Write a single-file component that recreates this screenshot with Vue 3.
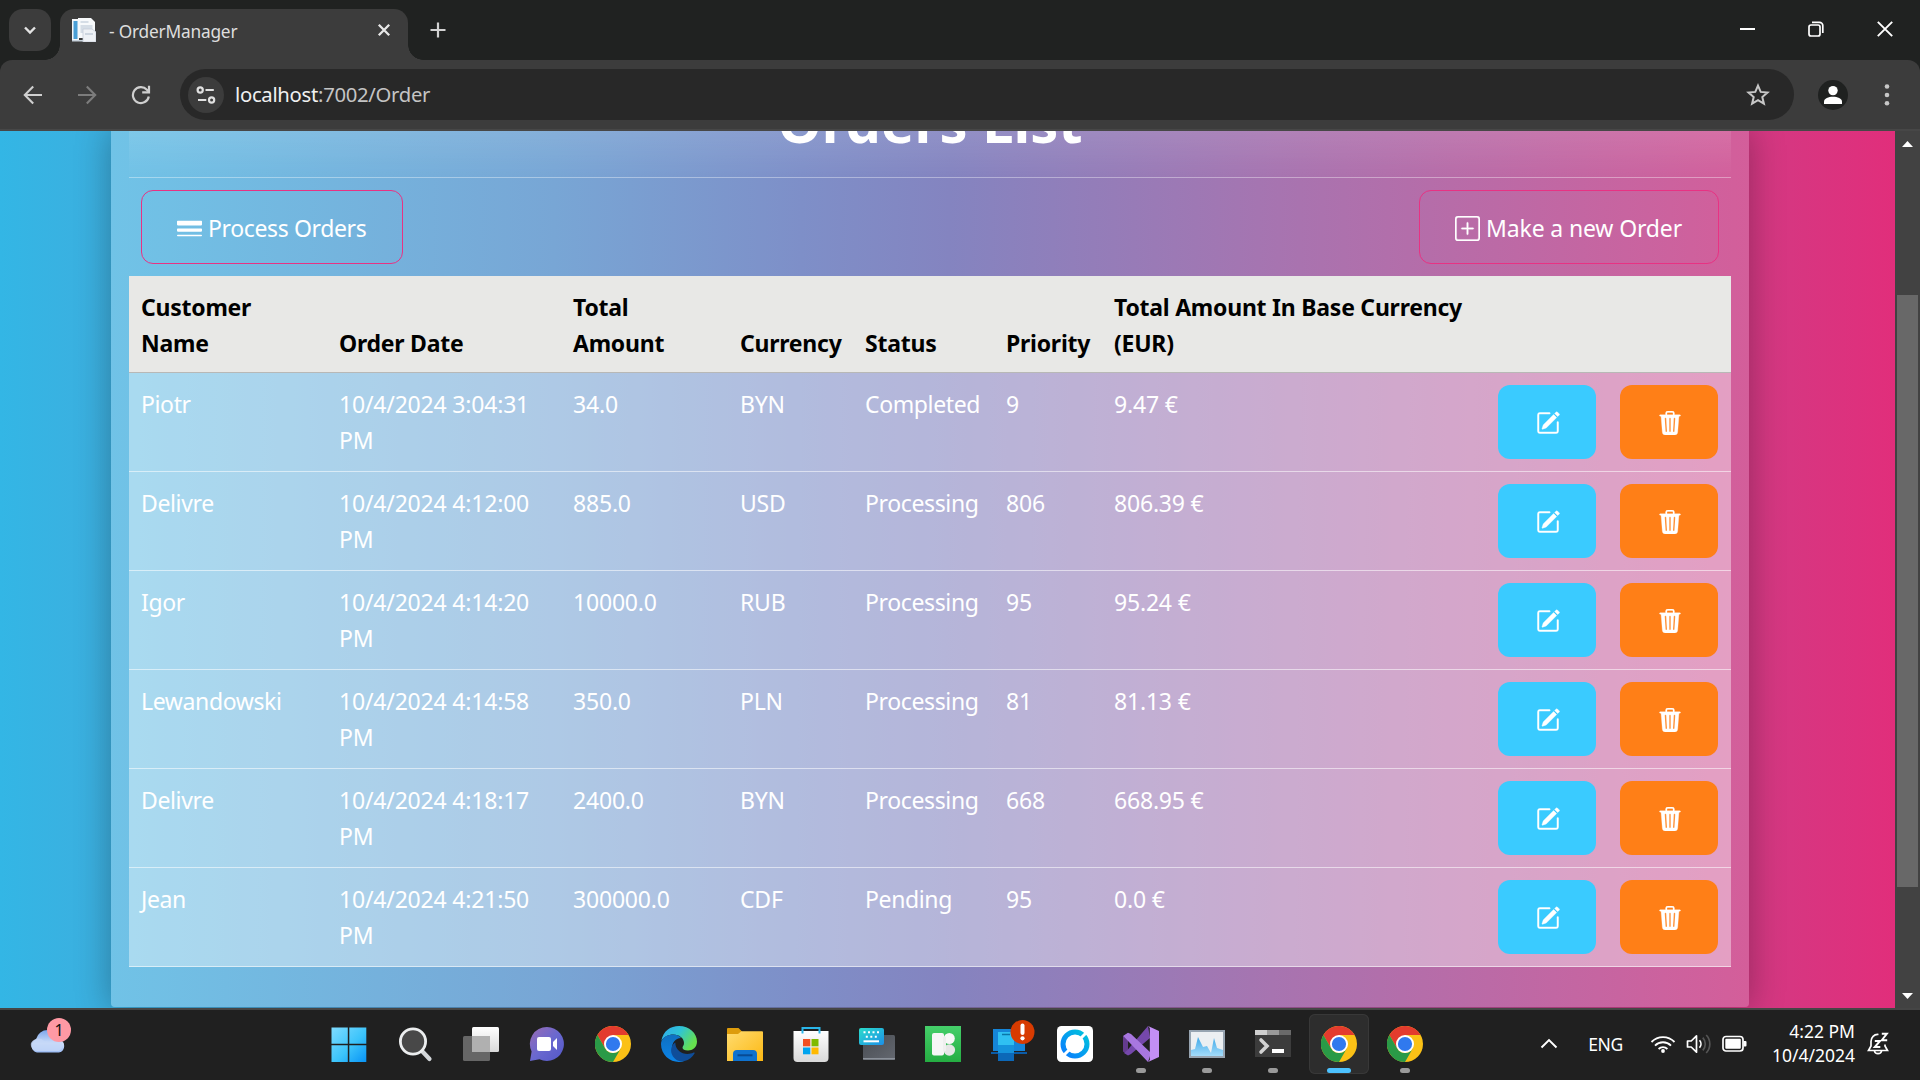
<script setup>
const orders = [
  { customer: 'Piotr', date: '10/4/2024 3:04:31', amount: '34.0', currency: 'BYN', status: 'Completed', priority: 9, base: '9.47 €' },
  { customer: 'Delivre', date: '10/4/2024 4:12:00', amount: '885.0', currency: 'USD', status: 'Processing', priority: 806, base: '806.39 €' },
  { customer: 'Igor', date: '10/4/2024 4:14:20', amount: '10000.0', currency: 'RUB', status: 'Processing', priority: 95, base: '95.24 €' },
  { customer: 'Lewandowski', date: '10/4/2024 4:14:58', amount: '350.0', currency: 'PLN', status: 'Processing', priority: 81, base: '81.13 €' },
  { customer: 'Delivre', date: '10/4/2024 4:18:17', amount: '2400.0', currency: 'BYN', status: 'Processing', priority: 668, base: '668.95 €' },
  { customer: 'Jean', date: '10/4/2024 4:21:50', amount: '300000.0', currency: 'CDF', status: 'Pending', priority: 95, base: '0.0 €' }
]
const apps = [
  { id: 'start' }, { id: 'search' }, { id: 'taskview' }, { id: 'chat' }, { id: 'chrome' }, { id: 'edge' },
  { id: 'folder' }, { id: 'store' }, { id: 'keyboard' }, { id: 'icons8' }, { id: 'phone' }, { id: 'ring' },
  { id: 'vs', open: true }, { id: 'perf', open: true }, { id: 'terminal', open: true },
  { id: 'chrome', active: true }, { id: 'chrome', open: true }
]
</script>

<template>
  <div class="screen">
    <header class="tabstrip">
      <button class="tabsearch">
        <svg width="14" height="14" viewBox="0 0 14 14"><path d="M2 4.500l5 5 5-5" fill="none" stroke="#e3e3e3" stroke-width="2.400" /></svg>
      </button>
      <div class="tab">
        <svg class="favicon" width="24" height="24" viewBox="0 0 24 24">
          <path d="M0 1h7v22H0z" fill="#f4f6f8" /><path d="M1.500 3h4v18h-4z" fill="#4a9fd6" />
          <path d="M6 0h13l4 4v16H6z" fill="#f7f9fb" /><path d="M8.500 3h8v2h-8zM8.500 7h12v8h-12z" fill="#d5dde6" />
          <path d="M11 11h9l4 3v10H11z" fill="#eef1f5" stroke="#c5cdd8" stroke-width=".8" />
          <path d="M13 15h8v2h-8z" fill="#cdd5df" /><path d="M0 22h11v1.500H0z" fill="#c9d3dd" />
        </svg>
        <span class="tabtitle">- OrderManager</span>
        <svg class="tabclose" width="14" height="14" viewBox="0 0 14 14"><path d="M1.800 1.800l10.400 10.400M12.200 1.800L1.800 12.200" stroke="#e8e8e8" stroke-width="2.300" /></svg>
      </div>
      <svg class="newtab" width="16" height="16" viewBox="0 0 16 16"><path d="M8 .5v15M.5 8h15" stroke="#d2d2d2" stroke-width="2.200" /></svg>
      <div class="winbtns">
        <svg width="16" height="16" viewBox="0 0 16 16"><path d="M1 8h15" stroke="#fff" stroke-width="2" /></svg>
        <svg width="16" height="16" viewBox="0 0 16 16" fill="none" stroke="#fff" stroke-width="1.700">
          <rect x="1" y="4" width="11" height="11" rx="2" /><path d="M4 1.300h7.500a3.300 3.300 0 0 1 3.300 3.300V12" />
        </svg>
        <svg width="16" height="16" viewBox="0 0 16 16"><path d="M.8.8l14.400 14.400M15.200.8L.8 15.200" stroke="#fff" stroke-width="1.900" /></svg>
      </div>
    </header>

    <nav class="toolbar">
      <svg class="nav" width="20" height="20" viewBox="0 0 20 20" fill="none" stroke="#cfcfcf" stroke-width="2.100"><path d="M19 10H2M10.200 1.500L1.800 10l8.400 8.500" /></svg>
      <svg class="nav" width="20" height="20" viewBox="0 0 20 20" fill="none" stroke="#7c7c7c" stroke-width="2.100"><path d="M1 10h17M9.800 1.500L18.200 10l-8.400 8.500" /></svg>
      <svg class="nav" width="20" height="20" viewBox="0 0 20 20" fill="none" stroke="#cfcfcf" stroke-width="2.200"><path d="M17.800 11.500A8 8 0 1 1 15.900 4.700L17.500 6.500" /><path d="M18 .8V7.300H11.200" /></svg>
      <div class="address">
        <span class="siteinfo">
          <svg width="20" height="20" viewBox="0 0 20 20" fill="none" stroke="#e0e0e0" stroke-width="2.200">
            <circle cx="4.200" cy="5" r="2.600" /><path d="M9.500 5h8.300M2 15h8.300" /><circle cx="15.600" cy="15" r="2.600" />
          </svg>
        </span>
        <span class="url"><b>localhost</b>:7002/Order</span>
        <svg class="star" width="24" height="24" viewBox="0 0 24 24"><path d="M12 2.600l2.700 6.300 6.800.6-5.200 4.500 1.600 6.700L12 17.100l-5.900 3.600 1.600-6.700-5.200-4.500 6.800-.6z" fill="none" stroke="#c7c7c7" stroke-width="2" /></svg>
      </div>
      <span class="profile">
        <svg width="30" height="30" viewBox="0 0 30 30"><circle cx="15" cy="15" r="15" fill="#1f2120" /><circle cx="15" cy="10.600" r="4.700" fill="#fff" /><path d="M6 24v-2.300c0-3.400 4.500-5 9-5s9 1.600 9 5V24z" fill="#fff" /></svg>
      </span>
      <svg class="dots" width="6" height="24" viewBox="0 0 6 24" fill="#c7c7c7"><circle cx="3" cy="3.500" r="2.300" /><circle cx="3" cy="12" r="2.300" /><circle cx="3" cy="20.300" r="2.300" /></svg>
    </nav>

    <main class="viewport">
      <div class="page">
        <section class="card">
          <div class="cardhead"><h1>Orders List</h1></div>
          <div class="actions">
            <button class="outline process">
              <svg width="25" height="25" viewBox="0 0 16 16" fill="#fff"><path d="M0 3.500A.5.5 0 0 1 .5 3h15a.5.5 0 0 1 .5.5v2a.5.5 0 0 1-.5.5H.5a.5.5 0 0 1-.5-.5v-2zm0 5A.5.5 0 0 1 .5 8h15a.5.5 0 0 1 .5.5v1a.5.5 0 0 1-.5.5H.5a.5.5 0 0 1-.5-.5v-1zm0 4a.5.5 0 0 1 .5-.5h15a.5.5 0 0 1 0 1H.5a.5.5 0 0 1-.5-.5z" /></svg>
              <span>Process Orders</span>
            </button>
            <button class="outline make">
              <svg width="25" height="25" viewBox="0 0 16 16" fill="#fff" stroke="#fff" stroke-width=".2"><path d="M14 1a1 1 0 0 1 1 1v12a1 1 0 0 1-1 1H2a1 1 0 0 1-1-1V2a1 1 0 0 1 1-1h12zM2 0a2 2 0 0 0-2 2v12a2 2 0 0 0 2 2h12a2 2 0 0 0 2-2V2a2 2 0 0 0-2-2H2z" /><path d="M8 4a.5.5 0 0 1 .5.5v3h3a.5.5 0 0 1 0 1h-3v3a.5.5 0 0 1-1 0v-3h-3a.5.5 0 0 1 0-1h3v-3A.5.5 0 0 1 8 4z" /></svg>
              <span>Make a new Order</span>
            </button>
          </div>
          <table>
            <colgroup><col class="w1"><col class="w2"><col class="w3"><col class="w4"><col class="w5"><col class="w6"><col class="w7"><col class="w8"><col class="w9"></colgroup>
            <thead>
              <tr>
                <th>Customer<br>Name</th><th>Order Date</th><th>Total<br>Amount</th><th>Currency</th><th>Status</th><th>Priority</th>
                <th>Total Amount In Base Currency<br>(EUR)</th><th></th><th></th>
              </tr>
            </thead>
            <tbody>
              <tr v-for="(o, i) in orders" :key="i">
                <td class="word">{{ o.customer }}</td>
                <td>{{ o.date }}<br>PM</td>
                <td>{{ o.amount }}</td>
                <td>{{ o.currency }}</td>
                <td class="word">{{ o.status }}</td>
                <td>{{ o.priority }}</td>
                <td>{{ o.base }}</td>
                <td class="cell">
                  <button class="act edit">
                    <svg width="24" height="24" viewBox="0 0 16 16" fill="#fff" stroke="#fff" stroke-width=".3"><path d="M15.502 1.940a.5.5 0 0 1 0 .706L14.459 3.690l-2-2L13.502.646a.5.5 0 0 1 .707 0l1.293 1.293zm-1.750 2.456-2-2L4.939 9.210a.5.5 0 0 0-.121.196l-.805 2.414a.25.25 0 0 0 .316.316l2.414-.805a.5.5 0 0 0 .196-.12l6.813-6.814z" /><path d="M1 13.500A1.500 1.500 0 0 0 2.500 15h11a1.500 1.500 0 0 0 1.500-1.500v-6a.5.5 0 0 0-1 0v6a.5.5 0 0 1-.5.5h-11a.5.5 0 0 1-.5-.5v-11a.5.5 0 0 1 .5-.5H9a.5.5 0 0 0 0-1H2.500A1.500 1.500 0 0 0 1 2.500v11z" /></svg>
                  </button>
                </td>
                <td class="cell">
                  <button class="act del">
                    <svg width="24" height="24" viewBox="0 0 16 16" fill="#fff" stroke="#fff" stroke-width=".2"><path d="M11 1.500v1h3.500a.5.5 0 0 1 0 1h-.538l-.853 10.660A2 2 0 0 1 11.115 16h-6.230a2 2 0 0 1-1.994-1.840L2.038 3.500H1.500a.5.5 0 0 1 0-1H5v-1A1.500 1.500 0 0 1 6.500 0h3A1.500 1.500 0 0 1 11 1.500Zm-5 0v1h4v-1a.5.5 0 0 0-.5-.5h-3a.5.5 0 0 0-.5.5ZM4.500 5.029l.5 8.500a.5.5 0 1 0 .998-.06l-.5-8.500a.5.5 0 1 0-.998.06Zm6.530-.528a.5.5 0 0 0-.528.470l-.5 8.500a.5.5 0 0 0 .998.058l.5-8.500a.5.5 0 0 0-.470-.528ZM8 4.500a.5.5 0 0 0-.5.5v8.500a.5.5 0 0 0 1 0V5a.5.5 0 0 0-.5-.5Z" /></svg>
                  </button>
                </td>
              </tr>
            </tbody>
          </table>
        </section>
      </div>
      <aside class="scrollbar">
        <svg width="11" height="6" viewBox="0 0 11 6"><path d="M5.500 0L11 6H0z" fill="#fff" /></svg>
        <div class="track"><div class="thumb"></div></div>
        <svg width="11" height="6" viewBox="0 0 11 6"><path d="M5.500 6L11 0H0z" fill="#fff" /></svg>
      </aside>
    </main>

    <footer class="taskbar">
      <svg width="0" height="0" class="defs">
        <defs>
          <linearGradient id="gWin" x1="0" y1="0" x2="1" y2="1"><stop offset="0" stop-color="#7fdcff" /><stop offset=".55" stop-color="#3cc4fb" /><stop offset="1" stop-color="#0893f5" /></linearGradient>
          <linearGradient id="gCloud" x1="0" y1="0" x2="0" y2="1"><stop offset="0" stop-color="#7aa5ec" /><stop offset=".6" stop-color="#cfdffa" /><stop offset="1" stop-color="#9dbdf5" /></linearGradient>
          <linearGradient id="gChat" x1="0" y1="0" x2="1" y2="1"><stop offset="0" stop-color="#9a6cb4" /><stop offset=".5" stop-color="#6a68cf" /><stop offset="1" stop-color="#5358c8" /></linearGradient>
          <linearGradient id="gFold" x1="0" y1="0" x2="1" y2="1"><stop offset="0" stop-color="#ffdc70" /><stop offset="1" stop-color="#fcb813" /></linearGradient>
          <linearGradient id="gEdge" x1="0" y1="0" x2="1" y2=".5"><stop offset="0" stop-color="#2fa8f0" /><stop offset=".5" stop-color="#2fc3d6" /><stop offset="1" stop-color="#66e04e" /></linearGradient>
          <linearGradient id="gEdge2" x1="0" y1="0" x2="0" y2="1"><stop offset="0" stop-color="#0f6fc0" /><stop offset="1" stop-color="#0b84e8" /></linearGradient>
          <linearGradient id="gRing" x1="0" y1="1" x2="1" y2="0"><stop offset="0" stop-color="#0a7cff" /><stop offset="1" stop-color="#00c4dc" /></linearGradient>
          <linearGradient id="gKb" x1="0" y1="0" x2="1" y2="1"><stop offset="0" stop-color="#2bdccb" /><stop offset="1" stop-color="#1c8fe8" /></linearGradient>
          <linearGradient id="gGray" x1="0" y1="0" x2="1" y2="1"><stop offset="0" stop-color="#484c52" /><stop offset="1" stop-color="#646870" /></linearGradient>
          <linearGradient id="gWhite" x1="0" y1="0" x2="0" y2="1"><stop offset="0" stop-color="#fff" /><stop offset="1" stop-color="#d9d9d9" /></linearGradient>
          <linearGradient id="gGreen" x1="0" y1="0" x2="0" y2="1"><stop offset="0" stop-color="#45cf6a" /><stop offset="1" stop-color="#25ad42" /></linearGradient>
          <linearGradient id="gPerf" x1="0" y1="0" x2="0" y2="1"><stop offset="0" stop-color="#3fa8e8" /><stop offset="1" stop-color="#a4dcfa" /></linearGradient>
        </defs>
      </svg>
      <div class="weather">
        <svg width="36" height="26" viewBox="0 0 36 26"><path d="M7 25.500a7 7 0 0 1-1-13.300A12 12 0 0 1 18 3a11 11 0 0 1 11 9.600 6.600 6.600 0 0 1 0 12.900z" fill="url(#gCloud)" /><path d="M1 16c3-5 9-6 13-2 5 3 10-1 15-1a6.500 6.500 0 0 1 0 11H7c-4 0-7-4-6-8z" fill="#c4d7f7" opacity=".8" /></svg>
        <span class="badge">1</span>
      </div>
      <div class="apps">
        <div v-for="(a, i) in apps" :key="i" class="app" :class="{ active: a.active, open: a.open }">
          <svg v-if="a.id === 'start'" width="36" height="36" viewBox="0 0 36 36"><path d="M.5 1.500h16.300v16.300H.5zM18.300 1.500h17v16.300h-17zM.5 19.300h16.300V36H.5zM18.300 19.300h17V36h-17z" fill="url(#gWin)" /></svg>
          <svg v-else-if="a.id === 'search'" width="36" height="36" viewBox="0 0 36 36"><path d="M25 25l7.500 8" stroke="#d4d7da" stroke-width="4.200" stroke-linecap="round" /><circle cx="16" cy="15.500" r="12.600" fill="#484848" stroke="#eceeef" stroke-width="2.800" /></svg>
          <svg v-else-if="a.id === 'taskview'" width="36" height="36" viewBox="0 0 36 36"><rect x="9" y="1" width="27" height="25" rx="1.500" fill="url(#gWhite)" /><rect x="0" y="10" width="27" height="25" rx="1.500" fill="#666" /><path d="M9 10h18v16H9z" fill="#b0b0b0" /></svg>
          <svg v-else-if="a.id === 'chat'" width="36" height="36" viewBox="0 0 36 36"><path d="M18 1a17 17 0 1 1-7.500 32.300L1 35l1.600-9.500A17 17 0 0 1 18 1z" fill="url(#gChat)" /><rect x="8" y="11" width="14" height="14" rx="2" fill="#fff" /><path d="M24 16l4-4v12l-4-4z" fill="#fff" /></svg>
          <svg v-else-if="a.id === 'chrome'" width="36" height="36" viewBox="0 0 36 36">
            <circle cx="18" cy="18" r="18" fill="#fbc116" />
            <path d="M18 18V9h15.600A18 18 0 0 0 2.400 9l7.800 13.500z" fill="#e33b2e" />
            <path d="M2.400 9l7.800 13.500A9 9 0 0 0 25.800 22.500L18 36A18 18 0 0 1 2.400 9z" fill="#2a9a47" />
            <circle cx="18" cy="18" r="9" fill="#fff" /><circle cx="18" cy="18" r="7.100" fill="#3079ee" />
          </svg>
          <svg v-else-if="a.id === 'edge'" width="36" height="36" viewBox="0 0 36 36">
            <path d="M.3 15C2 5 9.500 0 18 0c10.500 0 18 7.500 18 15.500 0 6-4.500 9-9 9-3.500 0-5.500-1.500-5.500-2.800 0-1.400 1.500-2 1.500-4.700C23 12 18 8.500 12.500 8.500 7 8.500 2.500 11 .3 15z" fill="url(#gEdge)" />
            <path d="M0 18C0 12.500 5.500 8.500 12 8.500c4 0 6.500 1.500 8 3.500-6 .5-9 5-9 10 0 7 5 12.500 12 13.200C12 38.500 0 30.500 0 18z" fill="url(#gEdge2)" />
            <path d="M14.300 16.500C10.500 19 9 24 11 28.500c2.500 5.500 7.500 7.500 12.500 6.600 4.500-1 8-4 10-7.500.4-.8-.2-1.300-.9-1-5 2.500-11 1.500-14.500-1.500-2.800-2.500-3.800-5.600-3.800-8.600z" fill="#0f4d99" />
          </svg>
          <svg v-else-if="a.id === 'folder'" width="36" height="36" viewBox="0 0 36 36"><path d="M0 3a1 1 0 0 1 1-1h10.500l3.500 3.500V12H0z" fill="#dd9c0c" /><path d="M0 8h11l3.500-2.800H35a1 1 0 0 1 1 1V35H0z" fill="url(#gFold)" /><path d="M6 35v-7a4 4 0 0 1 4-4h16a4 4 0 0 1 4 4v7z" fill="#0f72cf" /><path d="M10.500 28.300h15v2h-15z" fill="#084a93" /></svg>
          <svg v-else-if="a.id === 'store'" width="36" height="36" viewBox="0 0 36 36"><path d="M.5 5h35v27a4 4 0 0 1-4 4h-27a4 4 0 0 1-4-4z" fill="url(#gWhite)" /><path d="M9.500 7.500V2h17v5.500" fill="none" stroke="#2ab6ea" stroke-width="2" /><path d="M10 13h7.300v7.300H10z" fill="#f25022" /><path d="M18.500 13h7v7.300h-7z" fill="#7fba00" /><path d="M10 21.500h7.300v6.800H10z" fill="#00a4ef" /><path d="M18.500 21.500h7v6.800h-7z" fill="#ffb900" /></svg>
          <svg v-else-if="a.id === 'keyboard'" width="36" height="36" viewBox="0 0 36 36"><rect x="4" y="9" width="32" height="25" rx="1.500" fill="url(#gGray)" /><path d="M4 32h32v1.500H4z" fill="#8c929b" /><rect x="0" y="2" width="25" height="17" rx="2" fill="url(#gKb)" /><path d="M4.500 6.300h2M9 6.300h2M13.500 6.300h2M18 6.300h2M6.800 10.800h2M11.300 10.800h2M15.800 10.800h2" stroke="#fff" stroke-width="2" /><path d="M4.500 15.300h15.500" stroke="#fff" stroke-width="2" /></svg>
          <svg v-else-if="a.id === 'icons8'" width="36" height="36" viewBox="0 0 36 36"><path d="M0 0h36v36H0z" fill="url(#gGreen)" /><rect x="7" y="7" width="12" height="22.500" rx="2" fill="#f6f6f6" /><circle cx="24.300" cy="12.500" r="5.500" fill="#f8f8f8" /><circle cx="24.300" cy="24" r="5.800" fill="#e6e6e6" /><path d="M18 11h3v14h-3z" fill="#efefef" /></svg>
          <svg v-else-if="a.id === 'phone'" width="46" height="44" viewBox="0 0 46 44" class="phone"><path d="M3 10h32v22H3z" fill="#1585d8" /><path d="M1 33h36v2H1z" fill="#0b5ca8" /><path d="M8 13h16v29H8z" fill="#2fc0f2" /><path d="M8 26h16v8H8z" fill="#1593dc" /><path d="M8 34h16v8H8z" fill="#0c68b8" /><path d="M12 15.500h8" stroke="#0a77a8" stroke-width="1.500" /><circle cx="32.500" cy="13" r="12" fill="#d83b01" /><path d="M32.500 6.500v7.500" stroke="#fff" stroke-width="4" stroke-linecap="round" /><circle cx="32.500" cy="19.300" r="2.100" fill="#fff" /></svg>
          <svg v-else-if="a.id === 'ring'" width="36" height="36" viewBox="0 0 36 36"><rect width="36" height="36" rx="4.500" fill="#fff" /><circle cx="18" cy="18" r="12" fill="none" stroke="url(#gRing)" stroke-width="5" /><path d="M6 30l6-6M24 12l6-6" stroke="#fff" stroke-width="3" /></svg>
          <svg v-else-if="a.id === 'vs'" width="36" height="36" viewBox="0 0 36 36"><path d="M0 10.500L5 7v22l-5-3.500z" fill="#643b8f" /><path d="M25 0L4 24.500 1 27l4 2.500 3-1.500L27 12z" fill="#7548ab" /><path d="M5 6.800L0 10l1 .8L25 36l3-9L8 8z" fill="#a877e0" /><path d="M25 0l11 5v26l-11 5 1.800-2V2z" fill="#c38ff5" /></svg>
          <svg v-else-if="a.id === 'perf'" width="36" height="36" viewBox="0 0 36 36"><path d="M0 4h36v28H0z" fill="#97a4b1" /><path d="M2 6h32v24H2z" fill="#eceff2" /><path d="M2 24l4-1 3-12 3 6 2 4 4-1 4 7 3-15 3 10 6 2v6H2z" fill="url(#gPerf)" /></svg>
          <svg v-else-if="a.id === 'terminal'" width="36" height="36" viewBox="0 0 36 36"><path d="M0 5a1 1 0 0 1 1-1h34a1 1 0 0 1 1 1v26H0z" fill="#3c3c3c" /><path d="M0 4h12v5H0z" fill="#cfcfcf" /><path d="M12 4h12v5H12z" fill="#9a9a9a" /><path d="M24 4h12v5H24z" fill="#6a6a6a" /><path d="M6 14l6 6-6 6" fill="none" stroke="#d2d2d2" stroke-width="3.600" stroke-linecap="round" /><path d="M17 23h12v4H17z" fill="#fff" /></svg>
        </div>
      </div>
      <div class="tray">
        <svg class="chev" width="18" height="18" viewBox="0 0 18 18"><path d="M1.500 12.500l7.500-7.500 7.500 7.500" fill="none" stroke="#fff" stroke-width="1.900" /></svg>
        <span class="lang">ENG</span>
        <svg class="wifi" width="26" height="20" viewBox="0 0 26 20" fill="none" stroke="#fff" stroke-width="1.800"><path d="M1.500 8a16 16 0 0 1 23 0M5 11.600a11.200 11.200 0 0 1 16 0M8.600 15a6.200 6.200 0 0 1 8.800 0" /><circle cx="13" cy="17" r="1.900" fill="#fff" stroke="none" /></svg>
        <svg class="vol" width="26" height="20" viewBox="0 0 26 20" fill="none" stroke="#fff" stroke-width="1.700"><path d="M1.500 7h3.700L10.500 1.800v16.400L5.200 13H1.500z" stroke-linejoin="round" /><path d="M13.500 6.300a5.500 5.500 0 0 1 0 7.400" /><path d="M16.800 3.600a9.500 9.500 0 0 1 0 12.800M20.200 1a13 13 0 0 1 0 18" stroke="#555" /></svg>
        <svg class="bat" width="25" height="18" viewBox="0 0 25 18"><rect x="1" y="1.500" width="20" height="14.500" rx="3" fill="none" stroke="#fff" stroke-width="1.700" /><rect x="3.300" y="3.800" width="15.500" height="10" rx="1" fill="#fff" /><path d="M21.500 6h2a1 1 0 0 1 1 1v3.500a1 1 0 0 1-1 1h-2z" fill="#fff" /></svg>
        <div class="clock"><span>4:22 PM</span><span>10/4/2024</span></div>
        <svg class="bell" width="24" height="24" viewBox="0 0 24 24" fill="none" stroke="#fff" stroke-width="1.700"><path d="M12.500 2.500C8 2 5 5.500 5 9.500V14L2.500 18.500h19L19 14v-1.500" /><path d="M8.500 19c.5 3.500 6.500 3.500 7 0" /><path d="M8.800 9h5.200l-5.200 6h5.500M15.800 1.800h5l-5 6.400h5.400" stroke-width="2" /></svg>
      </div>
    </footer>
  </div>
</template>

<style>
body { margin: 0; background: #202020; }
</style>

<style scoped>
.screen { width: 1920px; height: 1080px; display: flex; flex-direction: column; overflow: hidden; font-family: "Noto Sans", "Open Sans", sans-serif; background: #202221; }
svg { display: block; flex: none; }
button { font: inherit; padding: 0; margin: 0; border: 0; box-sizing: border-box; }

.tabstrip { height: 60px; flex: none; display: flex; background: #202221; }
.tabsearch { width: 42px; height: 42px; margin: 9px 0 0 9px; border-radius: 14px; background: #3c3c3c; display: flex; align-items: center; justify-content: center; }
.tab { position: relative; width: 348px; height: 51px; margin: 9px 0 0 9px; box-sizing: border-box; padding: 0 17px 9px 12px; border-radius: 14px 14px 0 0; background: #3c3c3c; display: flex; align-items: center; }
.tab::before, .tab::after { content: ""; position: absolute; bottom: 0; width: 15px; height: 15px; }
.tab::before { left: -15px; background: radial-gradient(circle at 0 0, transparent 14.5px, #3c3c3c 15px); }
.tab::after { right: -15px; background: radial-gradient(circle at 100% 0, transparent 14.5px, #3c3c3c 15px); }
.tabtitle { margin-left: 13px; font-size: 17.300px; letter-spacing: -.2px; color: #dedede; flex: 1; line-height: 24px; padding-top: 3px; white-space: nowrap; }
.newtab { margin: 22px 0 0 22px; }
.winbtns { display: flex; gap: 53px; margin: 21px 27px 0 auto; }

.toolbar { height: 71px; flex: none; box-sizing: border-box; border-bottom: 2px solid #474747; border-radius: 12px 12px 0 0; background: #3c3c3c; display: flex; align-items: center; padding-left: 23px; }
.nav { margin-right: 34px; }
.nav:nth-child(3) { margin-right: 28px; }
.address { width: 1614px; height: 51px; border-radius: 26px; background: #282828; display: flex; align-items: center; margin-left: 1px; }
.siteinfo { width: 36px; height: 36px; margin-left: 8px; border-radius: 50%; background: #3c3c3c; display: flex; align-items: center; justify-content: center; }
.url { margin-left: 11px; padding-bottom: 2px; font-size: 20.300px; letter-spacing: -.3px; color: #c4c4c4; }
.url b { font-weight: 400; color: #f0f0f0; }
.star { margin: 0 24px 0 auto; }
.profile { margin-left: 24px; }
.dots { margin-left: 36px; }

.viewport { height: 877px; flex: none; display: flex; }
.page { width: 1895px; overflow: hidden; background: linear-gradient(90deg, #33b6e5 0%, #8577b0 50%, #e12e7b 100%); }
.card { width: 1638px; height: 876px; margin-left: 111px; box-sizing: border-box; padding: 0 18px; border-radius: 0 0 4px 4px; background: linear-gradient(90.500deg, #70c3e7 0%, #78a6d5 27%, #7e8fc8 42%, #8484c0 51%, #a774b0 71%, #d45e9a 100%); box-shadow: 0 0 34px 2px rgba(0, 0, 0, .28); color: #fff; }
.cardhead { height: 47px; box-sizing: border-box; border-bottom: 1px solid rgba(255, 255, 255, .3); background: linear-gradient(180deg, rgba(255, 255, 255, .1), rgba(255, 255, 255, 0)); overflow: hidden; display: flex; justify-content: center; align-items: flex-end; }
h1 { margin: 0 0 20px; font-size: 56px; line-height: 72px; font-weight: 700; white-space: nowrap; }
.actions { height: 98px; display: flex; justify-content: space-between; align-items: center; padding: 0 12px; }
.outline { height: 74px; border: 1px solid #e83283; border-radius: 12px; background: none; color: #fff; font-size: 23px; display: flex; align-items: center; padding: 2px 0 0 35px; gap: 6px; white-space: nowrap; }
.process { width: 262px; letter-spacing: -.37px; }
.make { width: 300px; letter-spacing: -.14px; }

table { width: 1602px; border-collapse: collapse; table-layout: fixed; font-size: 23px; line-height: 36px; letter-spacing: -.19px; }
.w1 { width: 198px; } .w2 { width: 234px; } .w3 { width: 167px; } .w4 { width: 125px; } .w5 { width: 141px; }
.w6 { width: 108px; } .w7 { width: 384px; } .w8 { width: 122px; } .w9 { width: 123px; }
th, td { padding: 13px 12px 11px; text-align: left; white-space: nowrap; }
th { height: 72px; background: #e8e8e6; color: #000; font-weight: 700; vertical-align: bottom; border-bottom: 1px solid #b8b8b6; letter-spacing: -.24px; }
td { height: 74px; vertical-align: top; background: rgba(255, 255, 255, .4); border-bottom: 1px solid rgba(255, 255, 255, .55); background-clip: padding-box; }
td.word { letter-spacing: -.37px; }
td.cell { padding: 12px; }
.act { width: 98px; height: 74px; padding: 2px 0 0 1px; border-radius: 12px; display: flex; align-items: center; justify-content: center; }
.edit { background: #3acbff; }
.del { background: #ff7f17; }

.scrollbar { width: 25px; background: #424242; display: flex; flex-direction: column; align-items: center; padding: 10px 0 9px; box-sizing: border-box; }
.track { flex: 1; width: 21px; padding-top: 148px; }
.thumb { height: 592px; background: #686868; }

.taskbar { position: relative; height: 72px; flex: none; box-sizing: border-box; border-top: 2px solid #454545; background: #202020; display: flex; }
.defs { position: absolute; }
.weather { position: relative; width: 316px; box-sizing: border-box; padding: 17px 0 0 30px; }
.badge { position: absolute; left: 47px; top: 8px; width: 24px; height: 24px; border-radius: 50%; background: #ff99a4; color: #111; font-size: 16px; line-height: 24px; text-align: center; }
.apps { display: flex; }
.app { position: relative; width: 60px; height: 60px; margin: 4px 3px 0; box-sizing: border-box; border-radius: 6px; display: flex; justify-content: center; padding-top: 12px; }
.app.active { background: #2d2d2d; box-shadow: inset 0 0 0 1px #383838; }
.app.open::after, .app.active::after { content: ""; position: absolute; bottom: 1px; left: 25px; width: 10px; height: 5px; border-radius: 3px; background: #9a9a9a; }
.app.active::after { left: 18px; width: 24px; background: #4cc2ff; }
.phone { margin: -7px 0 0 8px; }
.tray { display: flex; align-items: center; margin-left: auto; padding-right: 30px; color: #fff; font-size: 17.500px; height: 68px; }
.lang { margin-left: 30px; letter-spacing: -.3px; }
.wifi { margin-left: 27px; }
.vol { margin-left: 10px; }
.bat { margin-left: 10px; }
.clock { width: 96px; margin: -2px 0 0 12px; display: flex; flex-direction: column; align-items: flex-end; line-height: 24px; white-space: nowrap; }
.bell { margin-left: 11px; }
</style>
